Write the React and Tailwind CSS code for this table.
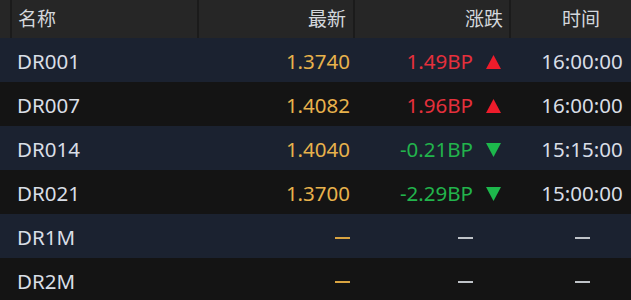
const rows = [
  { name: 'DR001', price: '1.3740', change: '1.49BP', dir: 'up', time: '16:00:00' },
  { name: 'DR007', price: '1.4082', change: '1.96BP', dir: 'up', time: '16:00:00' },
  { name: 'DR014', price: '1.4040', change: '-0.21BP', dir: 'down', time: '15:15:00' },
  { name: 'DR021', price: '1.3700', change: '-2.29BP', dir: 'down', time: '15:00:00' },
  { name: 'DR1M', price: null, change: null, dir: null, time: null },
  { name: 'DR2M', price: null, change: null, dir: null, time: null },
];

function Arrow({ dir }) {
  if (dir === 'up') {
    return (
      <svg width="15" height="14" viewBox="0 0 15 14">
        <polygon points="7.5,0 15,14 0,14" fill="#ee1c2b" />
      </svg>
    );
  }
  if (dir === 'down') {
    return (
      <svg width="15" height="14" viewBox="0 0 15 14">
        <polygon points="0,0 15,0 7.5,14" fill="#1db84c" />
      </svg>
    );
  }
  return null;
}

function Dash({ color }) {
  return <span className={`inline-block w-[15px] h-[2px] ${color}`} />;
}

function App() {
  return (
    <div
      className="w-[631px] h-[300px] overflow-hidden bg-[#141414]"
      style={{ fontFamily: '"Noto Sans", "Noto Sans CJK SC", sans-serif' }}
    >
      {/* header */}
      <div className="flex h-[38px] bg-[#262626] text-[19px] text-[#d3d7dc]">
        <div className="w-[12px] border-r-2 border-[#1b1b1b]" />
        <div className="w-[187px] flex items-center pl-[6px] border-r-2 border-[#1b1b1b]">名称</div>
        <div className="w-[156px] flex items-center justify-end pr-[7px] border-r-2 border-[#1b1b1b]">最新</div>
        <div className="w-[156px] flex items-center justify-end pr-[6px] border-r-2 border-[#1b1b1b]">涨跌</div>
        <div className="flex-1 flex items-center justify-center pl-[20px]">时间</div>
      </div>

      {rows.map((r, i) => (
        <div
          key={r.name}
          className={`flex items-center h-[44px] pt-[3px] text-[20.5px] ${i % 2 === 0 ? 'bg-[#1b2230]' : 'bg-[#141414]'}`}
        >
          <div className="w-[197px] pl-[17px] text-[#d9dee6]">{r.name}</div>
          <div className="w-[156px] pr-[3px] flex justify-end text-[#e8b24c]">
            {r.price ? r.price : <Dash color="bg-[#d9a441]" />}
          </div>
          <div
            className={`w-[120px] flex justify-end ${r.dir === 'up' ? 'text-[#e5303c]' : 'text-[#22b44c]'}`}
          >
            {r.change ? r.change : <Dash color="bg-[#bfc3c8]" />}
          </div>
          <div className="w-[60px] flex pl-[13px]">
            <Arrow dir={r.dir} />
          </div>
          <div className="flex-1 flex justify-center text-[#d9dee6]">
            {r.time ? r.time : <Dash color="bg-[#bfc3c8]" />}
          </div>
        </div>
      ))}
    </div>
  );
}

export default App;
